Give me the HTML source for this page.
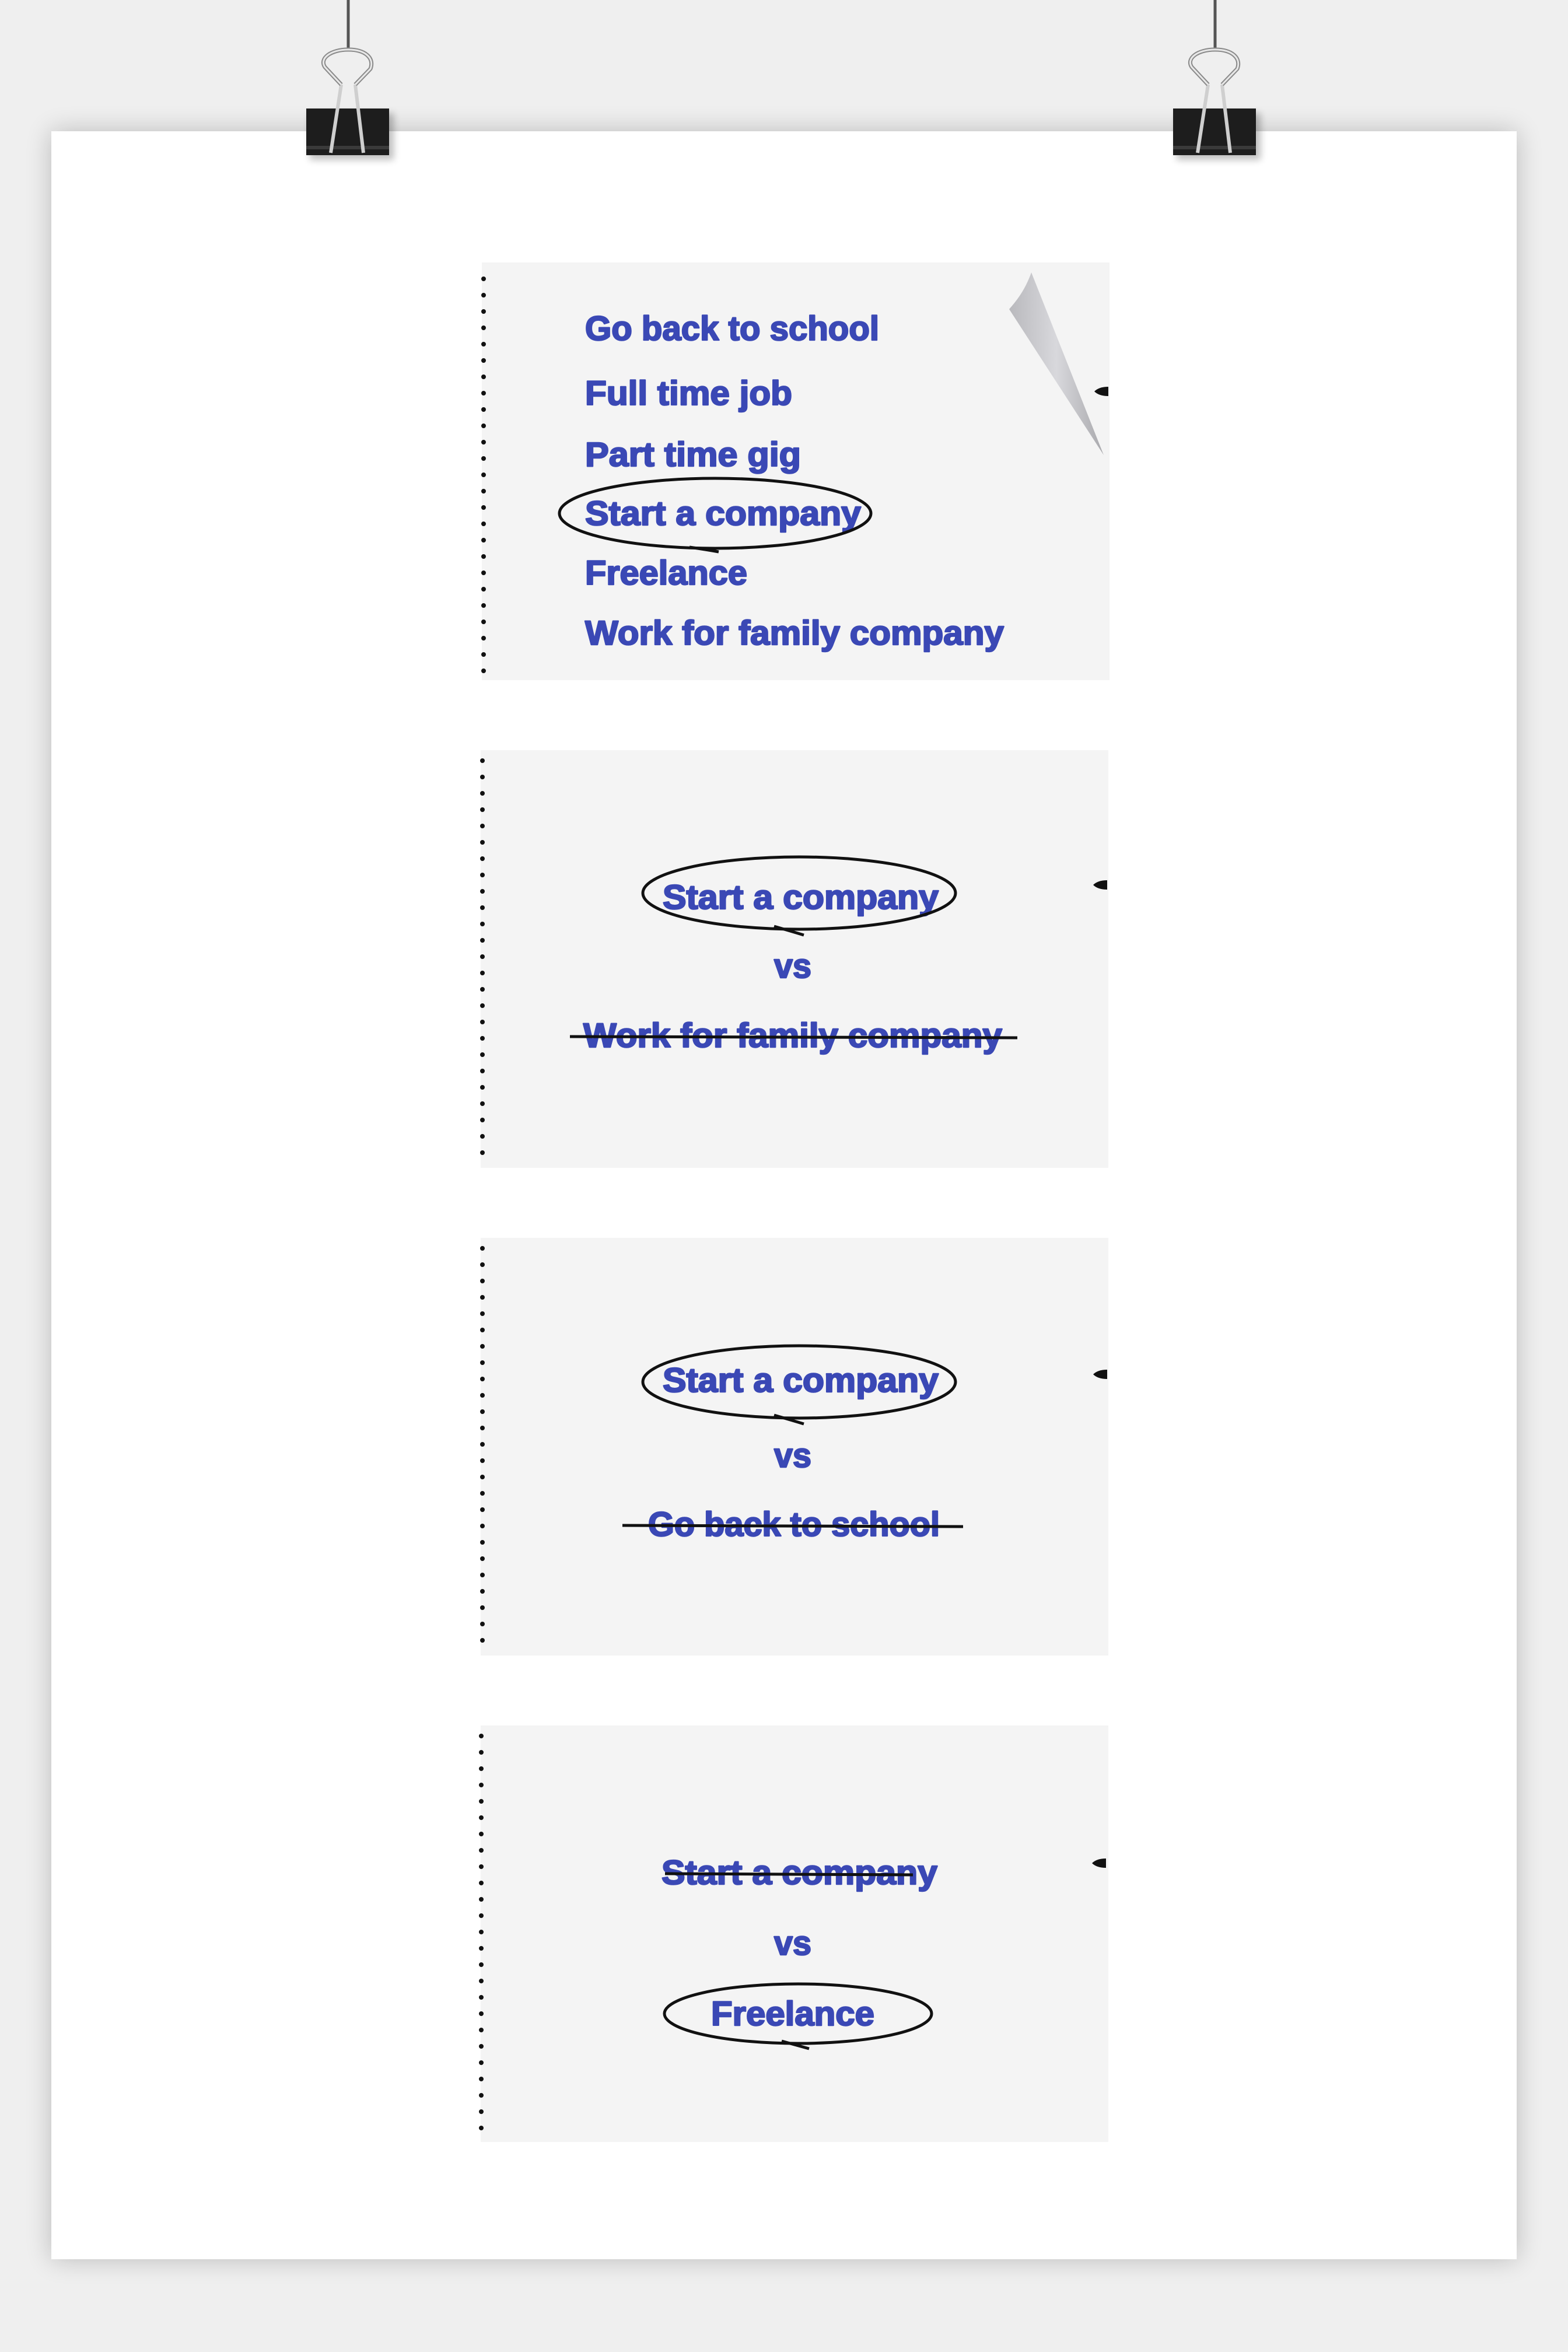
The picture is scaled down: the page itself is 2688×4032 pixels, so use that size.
<!DOCTYPE html>
<html><head><meta charset="utf-8"><style>
html,body{margin:0;padding:0;background:#efefef;}
svg{display:block;}
text{font-family:"Liberation Sans",sans-serif;font-weight:bold;fill:#3a48b5;stroke:#3a48b5;stroke-width:2.5px;stroke-linejoin:round;}
</style></head><body>
<svg width="2688" height="4032" viewBox="0 0 2688 4032" xmlns="http://www.w3.org/2000/svg">
<defs>
<filter id="sh" x="-5%" y="-5%" width="110%" height="110%"><feGaussianBlur stdDeviation="22"/></filter>
<filter id="bl" x="-20%" y="-20%" width="140%" height="140%"><feGaussianBlur stdDeviation="6"/></filter>
<linearGradient id="curl" x1="0" y1="0" x2="1" y2="0"><stop offset="0" stop-color="#b9b9bd"/><stop offset="0.5" stop-color="#d8d8dc"/><stop offset="1" stop-color="#a9a9ad"/></linearGradient>
<g id="clip">
 <line x1="0" y1="0" x2="0" y2="88" stroke="#555" stroke-width="5"/>
 <rect x="-66" y="194" width="144" height="80" fill="#000" opacity="0.25" filter="url(#bl)"/>
 <rect x="-72" y="186" width="142" height="80" fill="#1d1d1d"/>
 <rect x="-72" y="250" width="142" height="6" fill="#3a3a3a"/>
 <path d="M-30 262 L-12 145 M26 262 L12 145" stroke="#cfcfcf" stroke-width="6" fill="none"/>
 <path d="M-12 145 L-40 115 C-50 100 -30 85 0 85 C30 85 45 100 38 118 L12 145" stroke="#8a8a8a" stroke-width="7" fill="none"/>
 <path d="M-12 145 L-40 115 C-50 100 -30 85 0 85 C30 85 45 100 38 118 L12 145" stroke="#e8e8e8" stroke-width="3" fill="none"/>
</g>
</defs>
<rect width="2688" height="4032" fill="#efefef"/>
<rect x="88" y="225" width="2512" height="3648" fill="#000" opacity="0.22" filter="url(#sh)"/>
<rect x="88" y="225" width="2512" height="3648" fill="#fff"/>

<use href="#clip" x="597" y="0"/>
<use href="#clip" x="2083" y="0"/>

<!-- panels -->
<g fill="#f4f4f4">
<rect x="826" y="450" width="1076" height="716"/>
<rect x="824" y="1286" width="1076" height="716"/>
<rect x="824" y="2122" width="1076" height="716"/>
<rect x="824" y="2958" width="1076" height="714"/>
</g>
<g stroke="#111" stroke-width="8" stroke-linecap="round" stroke-dasharray="0 28" fill="none">
<line x1="829" y1="478" x2="829" y2="1160"/>
<line x1="827" y1="1304" x2="827" y2="1995"/>
<line x1="827" y1="2140" x2="827" y2="2830"/>
<line x1="825" y1="2976" x2="825" y2="3665"/>
</g>
<!-- right markers -->
<g>
<path d="M1876 671 Q1884 663 1900 663 L1900 679 Q1884 679 1876 671Z" fill="#111"/>
<path d="M1874 1517 Q1882 1509 1898 1509 L1898 1525 Q1882 1525 1874 1517Z" fill="#111"/>
<path d="M1874 2356 Q1882 2348 1898 2348 L1898 2364 Q1882 2364 1874 2356Z" fill="#111"/>
<path d="M1872 3194 Q1880 3186 1896 3186 L1896 3202 Q1880 3202 1872 3194Z" fill="#111"/>
</g>
<!-- page curl -->
<path d="M1768 467 C1760 490 1748 510 1730 530 L1892 780 Z" fill="url(#curl)"/>

<!-- panel 1 -->
<text x="1003" y="583" font-size="58" textLength="504" lengthAdjust="spacingAndGlyphs">Go back to school</text>
<text x="1003" y="694" font-size="58" textLength="355" lengthAdjust="spacingAndGlyphs">Full time job</text>
<text x="1003" y="799" font-size="58" textLength="370" lengthAdjust="spacingAndGlyphs">Part time gig</text>
<text x="1003" y="900" font-size="58" textLength="473" lengthAdjust="spacingAndGlyphs">Start a company</text>
<text x="1003" y="1002" font-size="58" textLength="278" lengthAdjust="spacingAndGlyphs">Freelance</text>
<text x="1003" y="1105" font-size="58" textLength="718" lengthAdjust="spacingAndGlyphs">Work for family company</text>
<g fill="none" stroke="#111" stroke-width="5">
<ellipse cx="1226" cy="880" rx="267" ry="60"/>
<path d="M1182 938 Q1210 942 1232 946"/>
</g>

<!-- panel 2 -->
<text x="1136" y="1558" font-size="58" textLength="473" lengthAdjust="spacingAndGlyphs">Start a company</text>
<text x="1327" y="1676" font-size="58" textLength="64" lengthAdjust="spacingAndGlyphs">vs</text>
<text x="1000" y="1795" font-size="58" textLength="718" lengthAdjust="spacingAndGlyphs">Work for family company</text>
<g fill="none" stroke="#111" stroke-width="5">
<ellipse cx="1370" cy="1531" rx="268" ry="62"/>
<path d="M1327 1588 Q1355 1596 1378 1603"/>
<path d="M977 1777 L1744 1779"/>
</g>

<!-- panel 3 -->
<text x="1136" y="2386" font-size="58" textLength="473" lengthAdjust="spacingAndGlyphs">Start a company</text>
<text x="1327" y="2515" font-size="58" textLength="64" lengthAdjust="spacingAndGlyphs">vs</text>
<text x="1111" y="2633" font-size="58" textLength="500" lengthAdjust="spacingAndGlyphs">Go back to school</text>
<g fill="none" stroke="#111" stroke-width="5">
<ellipse cx="1370" cy="2369" rx="268" ry="62"/>
<path d="M1327 2426 Q1355 2434 1378 2441"/>
<path d="M1067 2615 L1651 2617"/>
</g>

<!-- panel 4 -->
<text x="1134" y="3230" font-size="58" textLength="473" lengthAdjust="spacingAndGlyphs">Start a company</text>
<text x="1327" y="3351" font-size="58" textLength="64" lengthAdjust="spacingAndGlyphs">vs</text>
<text x="1219" y="3472" font-size="58" textLength="280" lengthAdjust="spacingAndGlyphs">Freelance</text>
<g fill="none" stroke="#111" stroke-width="5">
<path d="M1140 3212 L1565 3214"/>
<ellipse cx="1368" cy="3452" rx="229" ry="51"/>
<path d="M1340 3499 Q1365 3506 1387 3512"/>
</g>
</svg>
</body></html>
